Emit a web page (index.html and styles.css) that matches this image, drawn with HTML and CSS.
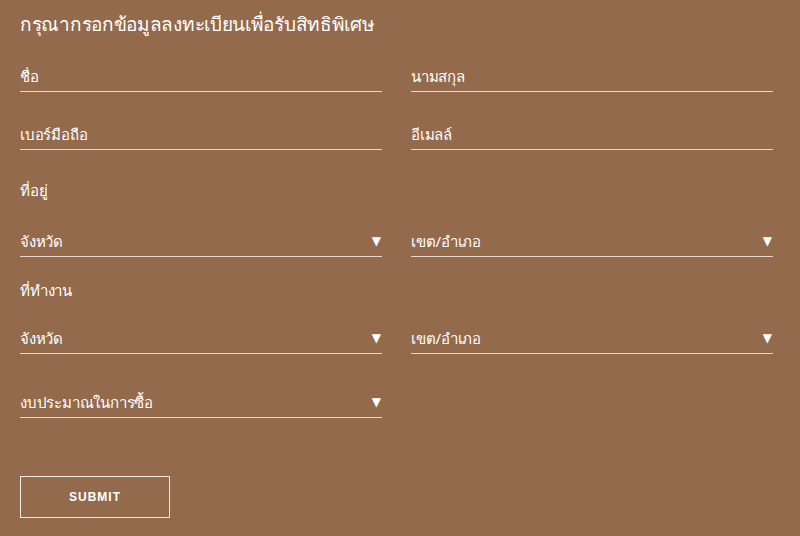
FILE: index.html
```html
<!DOCTYPE html>
<html lang="th">
<head>
    <meta charset="UTF-8">
    <meta name="viewport" content="width=device-width, initial-scale=1.0">
    <title>ลงทะเบียน</title>
    <link rel="stylesheet" href="styles.css">
</head>
<body>
    <form class="register">
        <h1 class="title">กรุณากรอกข้อมูลลงทะเบียนเพื่อรับสิทธิพิเศษ</h1>

        <div class="row row-first">
            <div class="field">ชื่อ</div>
            <div class="field">นามสกุล</div>
        </div>
        <div class="row row-second">
            <div class="field">เบอร์มือถือ</div>
            <div class="field">อีเมลล์</div>
        </div>

        <div class="section-label label-home">ที่อยู่</div>
        <div class="row row-home">
            <div class="field select">จังหวัด<span class="caret">▼</span></div>
            <div class="field select">เขต/อำเภอ<span class="caret">▼</span></div>
        </div>

        <div class="section-label label-work">ที่ทำงาน</div>
        <div class="row row-work">
            <div class="field select">จังหวัด<span class="caret">▼</span></div>
            <div class="field select">เขต/อำเภอ<span class="caret">▼</span></div>
        </div>

        <div class="row row-budget">
            <div class="field select">งบประมาณในการซื้อ<span class="caret">▼</span></div>
        </div>

        <button type="button" class="submit">SUBMIT</button>
    </form>
</body>
</html>
```

FILE: styles.css
```css
body {
    margin: 0;
    background-color: #946a4c;
    color: #ffffff;
    font-family: "Noto Sans", "DejaVu Sans", sans-serif;
}
.register { padding: 12px 27px 20px 20px; }
.title { margin: 0; font-size: 19px; font-weight: normal; line-height: 24px; letter-spacing: -0.3px; }

.row { display: grid; grid-template-columns: 362px 362px; column-gap: 29px; }
.row-first { margin-top: 24px; }
.row-second { margin-top: 26px; }
.row-home { margin-top: 25px; }
.row-work { margin-top: 22px; }
.row-budget { margin-top: 32px; }

.field {
    display: flex;
    justify-content: space-between;
    align-items: center;
    padding: 6px 0 5px 0;
    font-size: 15px;
    line-height: 20px;
    letter-spacing: -0.2px;
    border-bottom: 1px solid #e6d8cc;
}
.caret { font-size: 12px; padding-right: 1px; letter-spacing: 0; }

.section-label { font-size: 15px; line-height: 20px; letter-spacing: -0.2px; }
.label-home { margin-top: 30px; }
.label-work { margin-top: 23px; }

.submit {
    display: block;
    margin-top: 58px;
    width: 150px;
    height: 42px;
    background: transparent;
    border: 1px solid #f2ebe4;
    color: #ffffff;
    font-family: "Liberation Sans", Arial, sans-serif;
    font-size: 12px;
    font-weight: bold;
    letter-spacing: 1px;
    cursor: pointer;
}
```
